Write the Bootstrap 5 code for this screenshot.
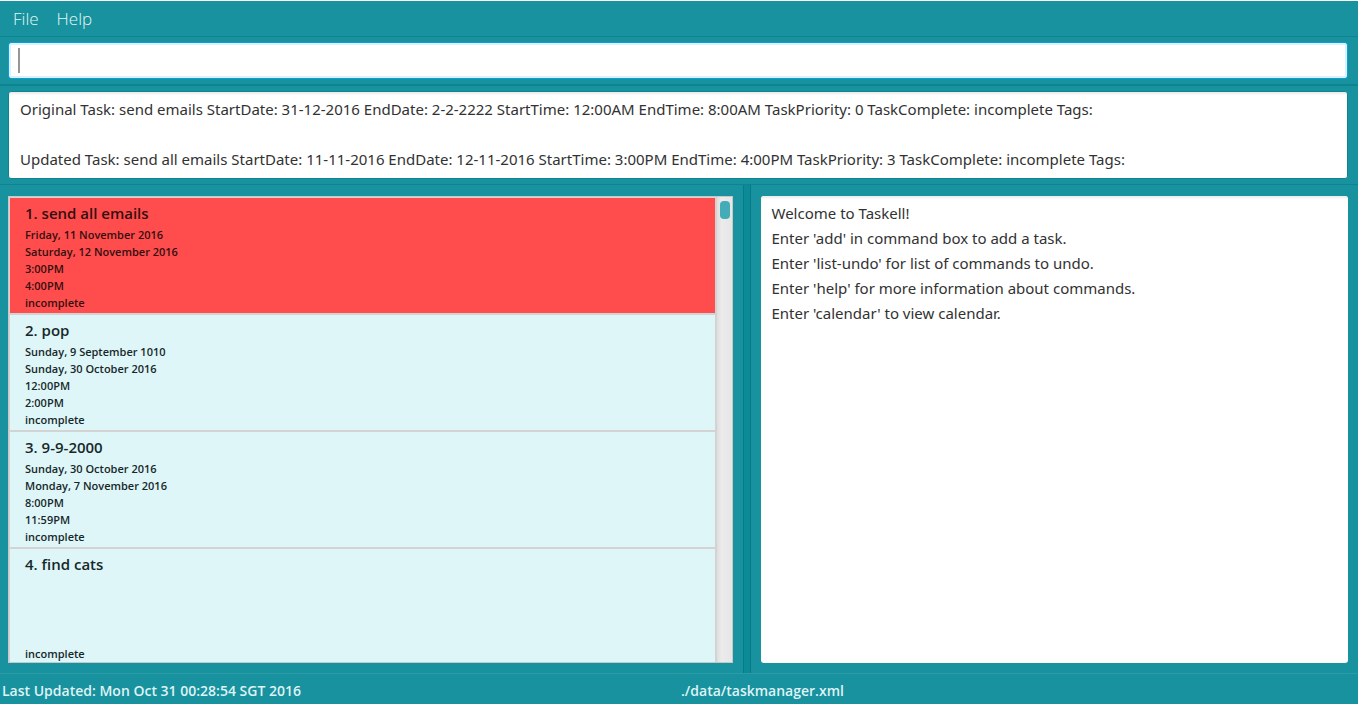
<!DOCTYPE html>
<html lang="en">
<head>
<meta charset="utf-8">
<meta name="viewport" content="width=device-width, initial-scale=1">
<title>Taskell</title>
<link href="https://cdn.jsdelivr.net/npm/bootstrap@5.3.0/dist/css/bootstrap.min.css" rel="stylesheet">
<style>
  :root {
    --teal: #17929e;
    --teal-dark: #0d8590;
  }
  body {
    font-family: "Open Sans", "Noto Sans", sans-serif;
    font-size: 15px;
    background: var(--teal);
    border-top: 1px solid #fff;
  }
  .menu-strip {
    height: 36px;
    padding: 0 4px;
    border-bottom: 1px solid var(--teal-dark);
  }
  .menu-strip button {
    padding: 0 9px;
    line-height: 34px;
    font-size: 17px;
    font-weight: 300;
    color: #e6f6f7;
    background: none;
    border: 0;
  }
  .command-pane {
    padding: 5px 10px 5px 8px;
    border-bottom: 2px solid var(--teal-dark);
  }
  .command-pane .form-control {
    height: 37px;
    padding: 0 10px;
    border: 1px solid #08a0da;
    border-radius: 3px;
    box-shadow: inset 0 0 0 2px #dcf1f9;
    caret-color: transparent;
  }
  .text-caret {
    left: 10px;
    top: 6px;
    bottom: 6px;
    width: 2px;
    background: #969696;
  }
  .result-pane {
    padding: 5px 10px 5px 8px;
    border-bottom: 1px solid var(--teal-dark);
  }
  .text-pane {
    display: block;
    width: 100%;
    padding: 5px 11px;
    font-family: "Noto Sans", sans-serif;
    line-height: 25px;
    color: #323232;
    background: #fff;
    border: 0;
    border-radius: 3px;
    box-shadow: inset 0 3px 2px -1px #ececec;
    resize: none;
    outline: 0;
    overflow: hidden;
  }
  .result-pane .text-pane {
    height: 88px;
    border: 1px solid var(--teal-dark);
  }
  .split {
    display: grid;
    grid-template-columns: minmax(0, 55fr) 8px minmax(0, 45fr);
    min-height: 0;
  }
  .split-left { padding: 11px 10px 10px 8px; min-height: 0; }
  .split-right { padding: 11px 10px 10px; min-height: 0; }
  .split-bar {
    background: #0b8b97;
    border: solid #077c87;
    border-width: 0 1px;
  }
  .task-box {
    border: 1px solid #c8c8c8;
    background: #d3d3d3;
  }
  .task-list { padding: 1px 0 0 1px; }
  .task-list .list-group-item {
    flex: none;
    padding: 5px 15px 2px;
    color: #16282a;
    background: #dff6f8;
    border: 0;
    border-bottom: 2px solid #d3d3d3;
    border-radius: 0;
    font-size: 11px;
    font-weight: 600;
    line-height: 17px;
  }
  .task-list .task-urgent {
    color: #330f0f;
    background: #ff4d4d;
  }
  .task-title {
    margin-bottom: 3px;
    font-size: 15px;
    font-weight: 600;
    line-height: 20px;
  }
  .task-line { min-height: 17px; }
  .scroll-track {
    width: 17px;
    padding: 4px 2px 4px 3px;
    border-left: 2px solid #d3d3d3;
    background: linear-gradient(90deg, #dedede, #ebebeb 30%, #e6e6e6);
  }
  .scroll-thumb {
    width: 10px;
    height: 18px;
    border-radius: 4px;
    background: #42adb8;
  }
  .status-strip {
    height: 31px;
    border-top: 1px solid #2b9ca7;
    color: #dff3f5;
    font-size: 14px;
    font-weight: 600;
    line-height: 33px;
  }
  .status-strip > div { padding-left: 2px; }
</style>
</head>
<body class="d-flex flex-column vh-100 overflow-hidden">
  <nav class="menu-strip d-flex flex-shrink-0">
    <button type="button">File</button>
    <button type="button">Help</button>
  </nav>

  <form class="command-pane flex-shrink-0">
    <div class="position-relative d-grid">
      <input type="text" class="form-control" aria-label="Command" autocomplete="off">
      <span class="text-caret position-absolute"></span>
    </div>
  </form>

  <section class="result-pane flex-shrink-0">
    <textarea class="text-pane" readonly aria-label="Result">Original Task: send emails StartDate: 31-12-2016 EndDate: 2-2-2222 StartTime: 12:00AM EndTime: 8:00AM TaskPriority: 0 TaskComplete: incomplete Tags:

Updated Task: send all emails StartDate: 11-11-2016 EndDate: 12-11-2016 StartTime: 3:00PM EndTime: 4:00PM TaskPriority: 3 TaskComplete: incomplete Tags:</textarea>
  </section>

  <main class="split flex-grow-1">
    <section class="split-left">
      <div class="task-box d-flex h-100 overflow-hidden">
        <ul class="task-list list-group rounded-0 flex-grow-1 overflow-hidden">
          <li class="list-group-item task-urgent">
            <h2 class="task-title">1. send all emails</h2>
            <div class="task-line">Friday, 11 November 2016</div>
            <div class="task-line">Saturday, 12 November 2016</div>
            <div class="task-line">3:00PM</div>
            <div class="task-line">4:00PM</div>
            <div class="task-line">incomplete</div>
          </li>
          <li class="list-group-item">
            <h2 class="task-title">2. pop</h2>
            <div class="task-line">Sunday, 9 September 1010</div>
            <div class="task-line">Sunday, 30 October 2016</div>
            <div class="task-line">12:00PM</div>
            <div class="task-line">2:00PM</div>
            <div class="task-line">incomplete</div>
          </li>
          <li class="list-group-item">
            <h2 class="task-title">3. 9-9-2000</h2>
            <div class="task-line">Sunday, 30 October 2016</div>
            <div class="task-line">Monday, 7 November 2016</div>
            <div class="task-line">8:00PM</div>
            <div class="task-line">11:59PM</div>
            <div class="task-line">incomplete</div>
          </li>
          <li class="list-group-item">
            <h2 class="task-title">4. find cats</h2>
            <div class="task-line"></div>
            <div class="task-line"></div>
            <div class="task-line"></div>
            <div class="task-line"></div>
            <div class="task-line">incomplete</div>
          </li>
        </ul>
        <div class="scroll-track flex-shrink-0"><div class="scroll-thumb"></div></div>
      </div>
    </section>
    <div class="split-bar"></div>
    <section class="split-right">
      <textarea class="text-pane h-100" readonly aria-label="Information">Welcome to Taskell!
Enter 'add' in command box to add a task.
Enter 'list-undo' for list of commands to undo.
Enter 'help' for more information about commands.
Enter 'calendar' to view calendar.</textarea>
    </section>
  </main>

  <footer class="status-strip row g-0 flex-shrink-0">
    <div class="col-6">Last Updated: Mon Oct 31 00:28:54 SGT 2016</div>
    <div class="col-6">./data/taskmanager.xml</div>
  </footer>
  <script src="https://cdn.jsdelivr.net/npm/bootstrap@5.3.0/dist/js/bootstrap.bundle.min.js"></script>
</body>
</html>
